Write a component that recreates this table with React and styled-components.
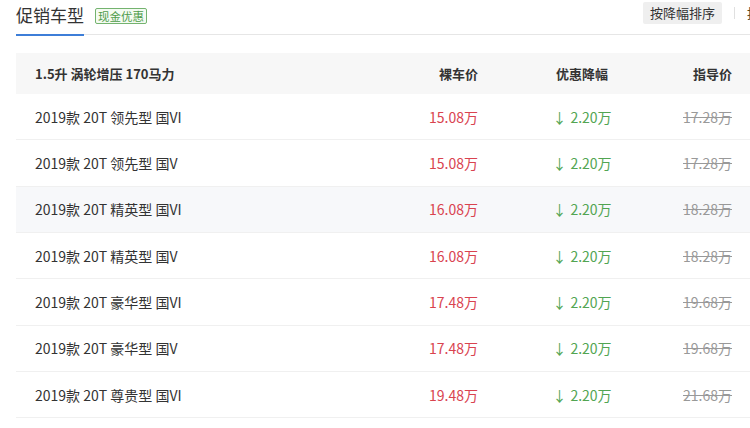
import styled, { createGlobalStyle } from "styled-components";

const GlobalStyle = createGlobalStyle`
  html, body {
    margin: 0;
    padding: 0;
    background: #fff;
    overflow: hidden;
  }
  body {
    font-family: "Noto Sans CJK SC", "Noto Sans", sans-serif;
    color: #333;
  }
`;

const Page = styled.div`
  width: 750px;
  height: 428px;
  padding-left: 16px;
  box-sizing: border-box;
  overflow: hidden;
`;

const TopBar = styled.div`
  display: flex;
  align-items: flex-start;
  height: 35px;
  box-sizing: border-box;
  border-bottom: 1px solid #e6e6e6;
  width: 796px;
`;

const Title = styled.div`
  font-size: 17px;
  line-height: 17px;
  padding-top: 6px;
  height: 36px;
  box-sizing: border-box;
  color: #333;
  border-bottom: 2px solid #3d7ed8;
  margin-bottom: -1px;
`;

const Tag = styled.span`
  margin-left: 11px;
  margin-top: 8px;
  height: 16px;
  box-sizing: border-box;
  padding: 0 2px;
  border: 1px solid #74b36f;
  border-radius: 2px;
  background: #f4fbf2;
  color: #4f9c4a;
  font-size: 11.5px;
  line-height: 14px;
`;

const Actions = styled.div`
  margin-left: auto;
  display: flex;
  align-items: center;
  margin-top: 2px;
`;

const SortButton = styled.div`
  height: 22px;
  padding: 0 7px;
  background: #efefef;
  border-radius: 2px;
  font-size: 13px;
  line-height: 22px;
  color: #333;
  white-space: nowrap;
`;

const Divider = styled.span`
  width: 1px;
  height: 12px;
  background: #e0e0e0;
  margin: 0 12px;
`;

const PlainSort = styled.div`
  font-size: 13px;
  line-height: 22px;
  color: #5a4a20;
  white-space: nowrap;
`;

const Table = styled.div`
  margin-top: 18px;
  width: 734px;
`;

const Row = styled.div`
  display: grid;
  grid-template-columns: 1fr 100px 202px 52px;
  align-items: center;
  padding: 0 18px 0 19px;
  height: ${({ $head }) => ($head ? "41px" : "46.33px")};
  box-sizing: border-box;
  background: ${({ $head, $active }) =>
    $head ? "#f7f7f7" : $active ? "#f7f8fa" : "#fff"};
  border-bottom: ${({ $head }) => ($head ? "none" : "1px solid #f0f0f0")};
  font-size: ${({ $head }) => ($head ? "13px" : "14px")};
  font-weight: ${({ $head }) => ($head ? 700 : 400)};
  color: #333;
  white-space: nowrap;
`;

const Cell = styled.div`
  text-align: ${({ $align }) => $align || "left"};
  padding-left: ${({ $align }) => ($align === "center" ? "6px" : "0")};
  color: ${({ $color }) => $color || "inherit"};
  text-decoration: ${({ $strike }) => ($strike ? "line-through" : "none")};
`;

const Arrow = styled.span`
  margin-right: 4px;
`;

const rows = [
  { name: "2019款 20T 领先型 国VI", price: "15.08万", guide: "17.28万" },
  { name: "2019款 20T 领先型 国V", price: "15.08万", guide: "17.28万" },
  { name: "2019款 20T 精英型 国VI", price: "16.08万", guide: "18.28万", active: true },
  { name: "2019款 20T 精英型 国V", price: "16.08万", guide: "18.28万" },
  { name: "2019款 20T 豪华型 国VI", price: "17.48万", guide: "19.68万" },
  { name: "2019款 20T 豪华型 国V", price: "17.48万", guide: "19.68万" },
  { name: "2019款 20T 尊贵型 国VI", price: "19.48万", guide: "21.68万" },
];

export default function App() {
  return (
    <Page>
      <GlobalStyle />
      <TopBar>
        <Title>促销车型</Title>
        <Tag>现金优惠</Tag>
        <Actions>
          <SortButton>按降幅排序</SortButton>
          <Divider />
          <PlainSort>按价格排序</PlainSort>
        </Actions>
      </TopBar>
      <Table>
        <Row $head>
          <Cell>1.5升 涡轮增压 170马力</Cell>
          <Cell $align="right">裸车价</Cell>
          <Cell $align="center">优惠降幅</Cell>
          <Cell $align="right">指导价</Cell>
        </Row>
        {rows.map((r, i) => (
          <Row key={i} $active={r.active}>
            <Cell>{r.name}</Cell>
            <Cell $align="right" $color="#d9434f">
              {r.price}
            </Cell>
            <Cell $align="center" $color="#52a552">
              <Arrow>↓</Arrow>2.20万
            </Cell>
            <Cell $align="right" $color="#999" $strike>
              {r.guide}
            </Cell>
          </Row>
        ))}
      </Table>
    </Page>
  );
}
